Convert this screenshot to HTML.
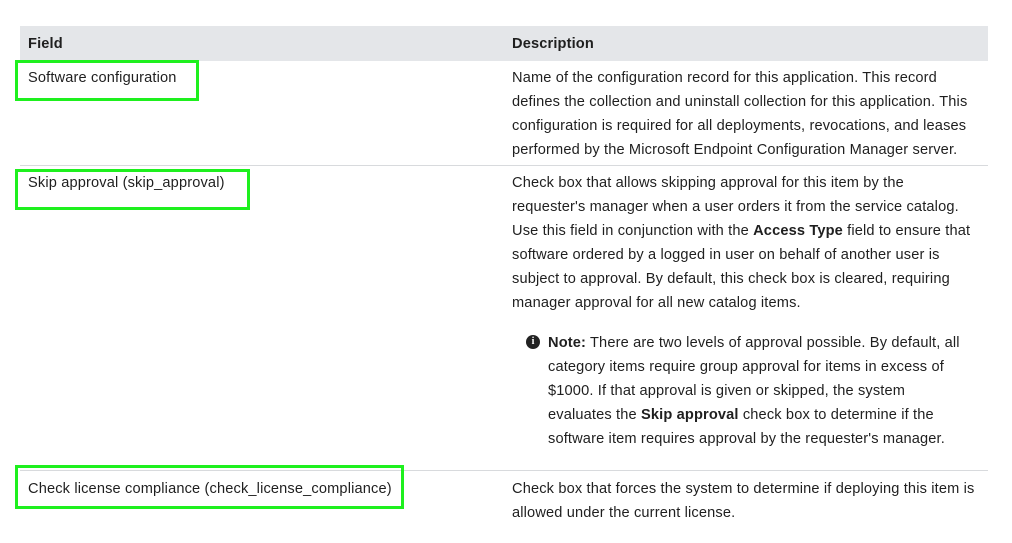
<!DOCTYPE html>
<html><head><meta charset="utf-8"><style>
body{margin:0;width:1012px;height:543px;background:#fff;position:relative;overflow:hidden;font-family:"Liberation Sans",sans-serif;font-size:14.6px;letter-spacing:0.15px;color:#1f1f1f}
.l{position:absolute;white-space:nowrap;line-height:24px;height:24px}
.hdr{position:absolute;left:20px;top:26px;width:968px;height:35px;background:#e4e6e9}
.sep{position:absolute;left:20px;width:968px;height:1px;background:#d8dadd}
.g{position:absolute;border:3px solid #1ef01e;box-sizing:border-box}
b{font-weight:bold}
.ic{position:absolute;left:526px;top:335px;width:14px;height:14px;border-radius:50%;background:#222;color:#fff;font:bold 10px "Liberation Serif",serif;text-align:center;line-height:14px;letter-spacing:0}
</style></head><body>
<div class="hdr"></div>
<div class="l" style="left:28px;top:32px"><b>Field</b></div>
<div class="l" style="left:512px;top:32px"><b>Description</b></div>

<div class="l" style="left:28px;top:66px">Software configuration</div>
<div class="l" style="left:512px;top:66px">Name of the configuration record for this application. This record</div>
<div class="l" style="left:512px;top:90px">defines the collection and uninstall collection for this application. This</div>
<div class="l" style="left:512px;top:114px">configuration is required for all deployments, revocations, and leases</div>
<div class="l" style="left:512px;top:138px">performed by the Microsoft Endpoint Configuration Manager server.</div>
<div class="sep" style="top:165px"></div>

<div class="l" style="left:28px;top:171px">Skip approval (skip_approval)</div>
<div class="l" style="left:512px;top:171px">Check box that allows skipping approval for this item by the</div>
<div class="l" style="left:512px;top:195px">requester's manager when a user orders it from the service catalog.</div>
<div class="l" style="left:512px;top:219px">Use this field in conjunction with the <b>Access Type</b> field to ensure that</div>
<div class="l" style="left:512px;top:243px">software ordered by a logged in user on behalf of another user is</div>
<div class="l" style="left:512px;top:267px">subject to approval. By default, this check box is cleared, requiring</div>
<div class="l" style="left:512px;top:291px">manager approval for all new catalog items.</div>

<div class="ic">i</div>
<div class="l" style="left:548px;top:331px"><b>Note:</b> There are two levels of approval possible. By default, all</div>
<div class="l" style="left:548px;top:355px">category items require group approval for items in excess of</div>
<div class="l" style="left:548px;top:379px">$1000. If that approval is given or skipped, the system</div>
<div class="l" style="left:548px;top:403px">evaluates the <b>Skip approval</b> check box to determine if the</div>
<div class="l" style="left:548px;top:427px">software item requires approval by the requester's manager.</div>
<div class="sep" style="top:470px"></div>

<div class="l" style="left:28px;top:477px">Check license compliance (check_license_compliance)</div>
<div class="l" style="left:512px;top:477px">Check box that forces the system to determine if deploying this item is</div>
<div class="l" style="left:512px;top:501px">allowed under the current license.</div>

<div class="g" style="left:15px;top:60px;width:184px;height:41px"></div>
<div class="g" style="left:15px;top:169px;width:235px;height:41px"></div>
<div class="g" style="left:15px;top:465px;width:389px;height:44px"></div>
</body></html>
